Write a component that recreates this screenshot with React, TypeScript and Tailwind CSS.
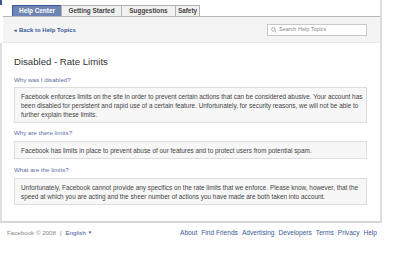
import React from "react";

const font = { fontFamily: '"Liberation Sans", Arial, sans-serif' };

function Tab({ label, w, active, last }: { label: string; w: string; active?: boolean; last?: boolean }) {
  return (
    <div
      className={
        "h-[11px] flex items-center justify-center text-[6.4px] font-bold leading-none border-t border-l " +
        (last ? "border-r " : "") +
        (active
          ? "bg-[#6d84b4] text-white border-[#3b5998] "
          : "bg-[#f1f1f1] text-[#444] border-[#b3b3b3] ") +
        w
      }
    >
      {label}
    </div>
  );
}

function Question({ children, mt }: { children: React.ReactNode; mt: string }) {
  return <div className={"h-[10px] leading-[10px] text-[6.2px] text-[#5b6f9b] " + mt}>{children}</div>;
}

function Box({ lines, mt }: { lines: string[]; mt: string }) {
  return (
    <div className={"w-[353px] bg-[#f7f7f7] border border-[#dddddd] pl-[6px] pt-[4px] pb-[3px] " + mt}>
      {lines.map((l, i) => (
        <div key={i} className="h-[9px] leading-[9px] text-[6.4px] text-[#444] whitespace-nowrap">
          {l}
        </div>
      ))}
    </div>
  );
}

export default function App() {
  return (
    <div className="w-[400px] h-[254px] bg-white overflow-hidden relative" style={font}>
      <div className="absolute left-0 top-0 w-[2px] h-[5px] bg-[#3b5998]" />
      <div className="w-[382px] border-r-2 border-[#dcdcdc]">
        <div className="h-[17px] flex items-end pl-[9px] border-b border-[#b5b5b5] ml-[3px]">
          <Tab label="Help Center" w="w-[49px]" active />
          <Tab label="Getting Started" w="w-[60px]" />
          <Tab label="Suggestions" w="w-[54px]" />
          <Tab label="Safety" w="w-[25px]" last />
        </div>
        <div className="h-[26px] bg-[#f4f4f4] flex items-center justify-between pl-[11px] pr-[13px] ml-[3px] border-b border-[#e8e8e8]">
          <div className="flex items-center gap-[2px] text-[6px] font-bold text-[#3b5998] leading-none mt-[1px]">
            <span className="text-[5px]">◂</span>
            <span>Back to Help Topics</span>
          </div>
          <div className="w-[100px] h-[12px] bg-white border border-[#c8c8c8] flex items-center pl-[3px] gap-[2px]">
            <svg width="6" height="6" viewBox="0 0 10 10" fill="none" stroke="#999" strokeWidth="1.3">
              <circle cx="4" cy="4" r="3" />
              <path d="M6.2 6.2 L9 9" />
            </svg>
            <span className="text-[5.5px] text-[#888] leading-none">Search Help Topics</span>
          </div>
        </div>
        <div className="border-l-2 border-[#e0e0e0] pl-[12px] pb-[16px] border-b-2 border-b-[#d6d6d6]">
          <div className="pt-[12px] h-[26px] leading-[14px] text-[9.6px] text-[#333]">Disabled - Rate Limits</div>
          <Question mt="mt-[6px]">Why was I disabled?</Question>
          <Box
            mt="mt-[2px]"
            lines={[
              "Facebook enforces limits on the site in order to prevent certain actions that can be considered abusive. Your account has",
              "been disabled for persistent and rapid use of a certain feature. Unfortunately, for security reasons, we will not be able to",
              "further explain these limits.",
            ]}
          />
          <Question mt="mt-[5px]">Why are there limits?</Question>
          <Box
            mt="mt-[3px]"
            lines={["Facebook has limits in place to prevent abuse of our features and to protect users from potential spam."]}
          />
          <Question mt="mt-[6px]">What are the limits?</Question>
          <Box
            mt="mt-[3px]"
            lines={[
              "Unfortunately, Facebook cannot provide any specifics on the rate limits that we enforce. Please know, however, that the",
              "speed at which you are acting and the sheer number of actions you have made are both taken into account.",
            ]}
          />
        </div>
      </div>
      <div className="h-[20px] flex items-center justify-between pl-[7px] pr-[23px] leading-none">
        <div className="flex items-center text-[6.2px] text-[#888]">
          <span>Facebook © 2008</span>
          <span className="mx-[4px]">|</span>
          <span className="text-[#3b5998]">English</span>
          <span className="ml-[2px] text-[4.5px] text-[#3b5998]">▼</span>
        </div>
        <div className="flex items-center gap-[4px] text-[6.6px] text-[#3b5998]">
          <span>About</span>
          <span>Find Friends</span>
          <span>Advertising</span>
          <span>Developers</span>
          <span>Terms</span>
          <span>Privacy</span>
          <span>Help</span>
        </div>
      </div>
    </div>
  );
}
